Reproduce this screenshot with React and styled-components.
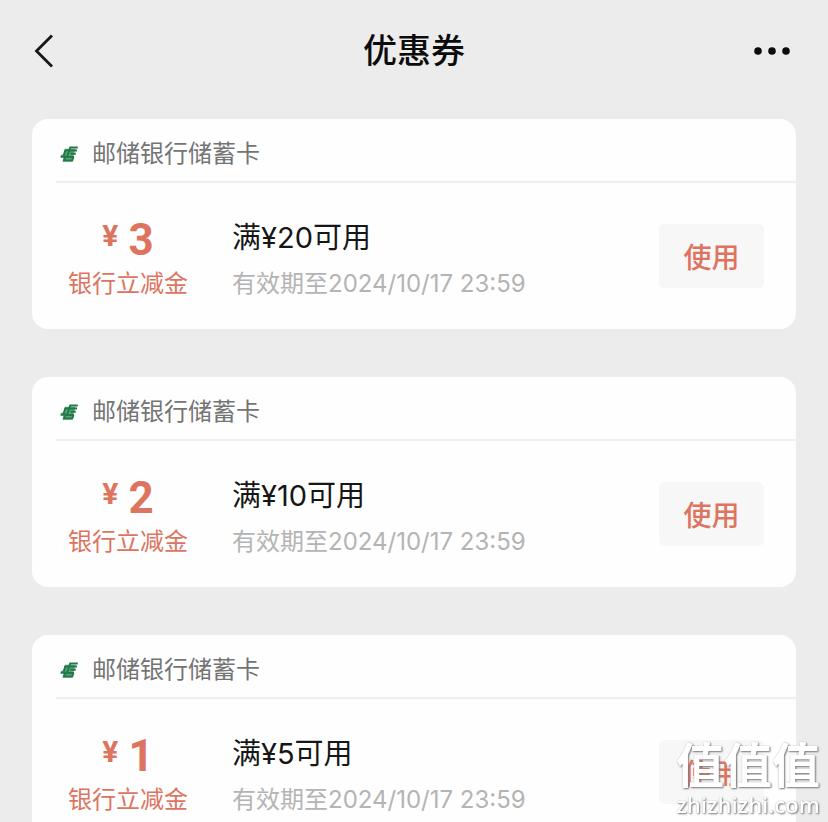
import React, { useState } from 'react'
import styled, { createGlobalStyle } from 'styled-components';

const coupons = [
  { id: 1, amount: 3, minimum: 20 },
  { id: 2, amount: 2, minimum: 10 },
  { id: 3, amount: 1, minimum: 5 }
]

const BackIcon = () => (
  <svg width="24" height="36" viewBox="0 0 24 36" fill="none" aria-hidden="true">
    <path d="M20 2.5 L4.5 18 L20 33.5" stroke="#161616" strokeWidth="2.8" />
  </svg>
)

const MoreIcon = () => (
  <svg width="36" height="8" viewBox="0 0 36 8" fill="#0c0c0c" aria-hidden="true">
    <circle cx="4" cy="4" r="3.8" />
    <circle cx="18" cy="4" r="3.8" />
    <circle cx="32" cy="4" r="3.8" />
  </svg>
)

const BankLogo = () => (
  <svg width="18" height="16" viewBox="0 0 18 16" aria-hidden="true">
    <path d="M5.2 2.8 H15.6 L11.8 15.6 H2.6 L3.6 11.8 H0.6 L1.8 8.6 H3.4 Z" fill="#5fa37c" />
    <g fill="none" stroke="#217a48" strokeWidth="2">
      <path d="M17.8 1.4 H10.2 L7 11 H14" />
      <path d="M17 4.6 H5.2 L3.8 9.6 M15.8 7.8 H10.4" />
      <path d="M0.6 10.6 H5.2 L4 14.6 H12.2 L13.4 11" />
    </g>
  </svg>
)

const Coupon = ({ data, used, onUse }) => (
  <Card>
    <CardHeader>
      <BankLogo />
      <BankName>邮储银行储蓄卡</BankName>
    </CardHeader>
    <CardBody>
      <Discount>
        <Price>
          <Currency>¥</Currency>
          <Amount>{data.amount}</Amount>
        </Price>
        <Kind>银行立减金</Kind>
      </Discount>
      <Details>
        <Condition>满¥{data.minimum}可用</Condition>
        <Expiry>有效期至2024/10/17 23:59</Expiry>
      </Details>
      <UseButton type="button" disabled={used} onClick={onUse}>使用</UseButton>
    </CardBody>
  </Card>
)

const App = () => {
  const [used, setUsed] = useState([])

  return (
    <>
      <GlobalStyle />
      <Page>
        <NavBar>
          <NavButton type="button" aria-label="返回"><BackIcon /></NavButton>
          <Title>优惠券</Title>
          <NavButton type="button" aria-label="更多" $end><MoreIcon /></NavButton>
        </NavBar>
        <List>
          {coupons.map(item => (
            <Coupon
              key={item.id}
              data={item}
              used={used.includes(item.id)}
              onUse={() => setUsed([...used, item.id])}
            />
          ))}
        </List>
      </Page>
      <Watermark>
        <WatermarkName>值值值</WatermarkName>
        <WatermarkSite>zhizhizhi.com</WatermarkSite>
      </Watermark>
    </>
  )
}

const GlobalStyle = createGlobalStyle`
  * {
    box-sizing: border-box;
  }

  body {
    margin: 0;
    background: #ececec;
    font-family: Inter, 'Noto Sans CJK SC', sans-serif;
  }

  button {
    border: none;
    padding: 0;
    font-family: inherit;
    cursor: pointer;
  }
`

const Page = styled.div`
  height: 100vh;
  overflow-y: auto;
  scrollbar-width: none;
`

const NavBar = styled.header`
  display: grid;
  grid-template-columns: 1fr auto 1fr;
  align-items: center;
  height: 102px;
  padding: 0 32px;
`

const NavButton = styled.button`
  display: flex;
  justify-self: ${props => props.$end ? 'end' : 'start'};
  padding-right: ${props => props.$end ? '6px' : '0'};
  background: none;
`

const Title = styled.h1`
  margin: 0;
  font-size: 34px;
  line-height: 48px;
  font-weight: 500;
  color: #0c0c0c;
`

const List = styled.main`
  display: flex;
  flex-direction: column;
  gap: 48px;
  padding: 17px 32px 48px;
`

const Card = styled.section`
  border-radius: 16px;
  background: #fefefe;
`

const CardHeader = styled.div`
  display: flex;
  align-items: center;
  gap: 14px;
  height: 64px;
  margin: 0 -3px 0 24px;
  padding: 7px 4px 0;
  border-bottom: 2px solid #efefef;
`

const BankName = styled.span`
  font-size: 24px;
  line-height: 36px;
  color: #747474;
`

const CardBody = styled.div`
  display: flex;
  align-items: center;
  height: 146px;
  padding: 0 32px 0 28px;
`

const Discount = styled.div`
  width: 136px;
  margin-right: 36px;
  padding-top: 6px;
  text-align: center;
  color: #dd7460;
`

const Price = styled.div`
  display: flex;
  justify-content: center;
  align-items: flex-start;
  gap: 10px;
  height: 50px;
  font-family: Roboto, sans-serif;
  font-weight: 700;
`

const Currency = styled.span`
  font-size: 30px;
  line-height: 40px;
`

const Amount = styled.span`
  font-size: 44px;
  line-height: 48px;
`

const Kind = styled.div`
  font-size: 24px;
  line-height: 36px;
`

const Details = styled.div`
  flex: 1;
  padding-top: 8px;
`

const Condition = styled.div`
  font-size: 29px;
  line-height: 40px;
  margin-bottom: 8px;
  color: #161616;
`

const Expiry = styled.div`
  font-size: 24px;
  line-height: 36px;
  color: #b4b4b4;
`

const UseButton = styled.button`
  width: 105px;
  height: 64px;
  border-radius: 6px;
  background: #f7f7f7;
  font-size: 28px;
  font-weight: 500;
  color: #dd7460;
`

const Watermark = styled.div`
  position: fixed;
  right: 8px;
  bottom: 4px;
  color: #fff;
  text-align: center;
  text-shadow: 1px 1px 2px #777, 0 0 1px #aaa;
  pointer-events: none;
`

const WatermarkName = styled.div`
  font-size: 48px;
  line-height: 48px;
  font-weight: 700;
`

const WatermarkSite = styled.div`
  font-family: 'Open Sans', sans-serif;
  font-size: 22px;
  line-height: 28px;
  font-weight: 600;
`

export default App
